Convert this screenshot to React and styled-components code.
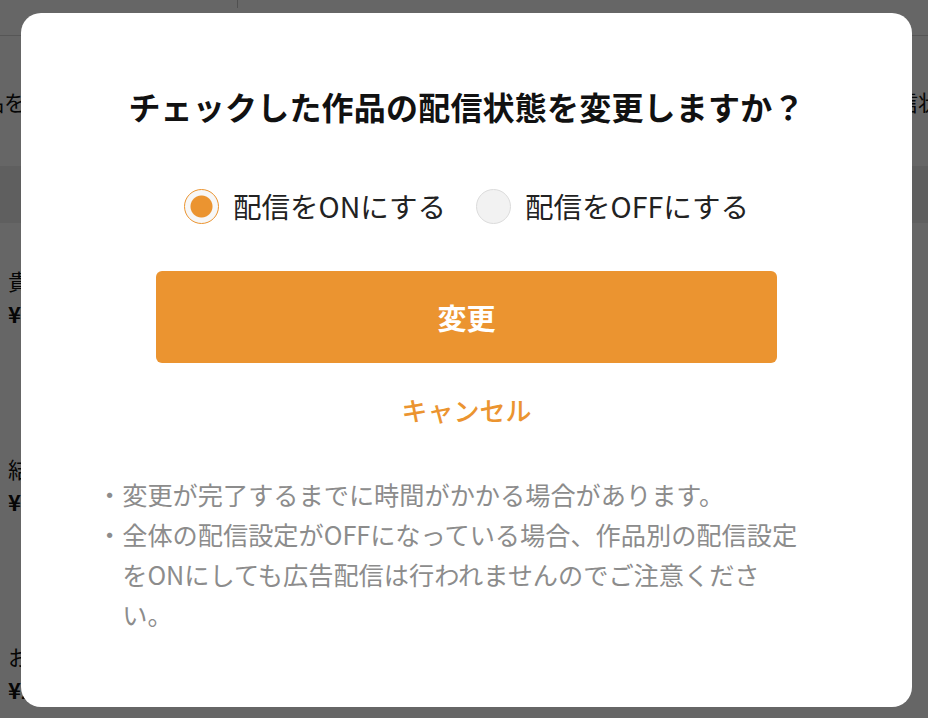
import React, { useState } from "react";
import styled, { createGlobalStyle } from "styled-components";

const ORANGE = "#eb9430";

const works = [
  { id: 1, title: "貴族令嬢の秘密の恋", price: "¥220" },
  { id: 2, title: "結婚から始まる物語", price: "¥330" },
  { id: 3, title: "お隣さんは王子様", price: "¥220" },
];

const notes = [
  "変更が完了するまでに時間がかかる場合があります。",
  "全体の配信設定がOFFになっている場合、作品別の配信設定をONにしても広告配信は行われませんのでご注意ください。",
];

export default function App() {
  const [status, setStatus] = useState("on");

  return (
    <>
      <GlobalStyle />
      <Page>
        <Header>
          <HeaderTab />
        </Header>
        <Toolbar>
          <ToolbarText $offset={-172}>チェックした作品を</ToolbarText>
          <ToolbarText $offset={848}>配信状態を一括変更</ToolbarText>
        </Toolbar>
        <TableHead />
        <WorkList>
          {works.map((work) => (
            <WorkItem key={work.id}>
              <WorkTitle>{work.title}</WorkTitle>
              <WorkPrice>{work.price}</WorkPrice>
            </WorkItem>
          ))}
        </WorkList>
      </Page>

      <Overlay>
        <Modal role="dialog" aria-modal="true">
          <Title>チェックした作品の配信状態を変更しますか？</Title>

          <RadioGroup>
            <RadioOption>
              <Radio
                type="radio"
                name="status"
                checked={status === "on"}
                onChange={() => setStatus("on")}
              />
              配信をONにする
            </RadioOption>
            <RadioOption>
              <Radio
                type="radio"
                name="status"
                checked={status === "off"}
                onChange={() => setStatus("off")}
              />
              配信をOFFにする
            </RadioOption>
          </RadioGroup>

          <SubmitButton type="button">変更</SubmitButton>
          <CancelButton type="button">キャンセル</CancelButton>

          <NoteList>
            {notes.map((note) => (
              <NoteItem key={note}>
                <Bullet>・</Bullet>
                <NoteText>{note}</NoteText>
              </NoteItem>
            ))}
          </NoteList>
        </Modal>
      </Overlay>
    </>
  );
}

const GlobalStyle = createGlobalStyle`
  * {
    box-sizing: border-box;
  }
  html, body {
    margin: 0;
    padding: 0;
  }
  body {
    font-family: "Noto Sans CJK JP", "Noto Sans", sans-serif;
    color: #222;
    background: #fff;
  }
`;

/*------------------------- 背景のページ -------------------------*/
const Page = styled.div`
  width: 100%;
  height: 718px;
  overflow: hidden;
  background: #fff;
`;

const Header = styled.div`
  height: 36px;
  border-bottom: 1px solid #d8d8d8;
`;

const HeaderTab = styled.div`
  width: 238px;
  height: 8px;
  border-right: 1px solid #c8c8c8;
`;

const Toolbar = styled.div`
  display: flex;
  align-items: center;
  height: 130px;
  white-space: nowrap;
`;

const ToolbarText = styled.span`
  flex: none;
  margin-left: ${(p) => p.$offset}px;
  font-size: 22px;
  color: #111;
`;

const TableHead = styled.div`
  height: 57px;
  background: #eee;
`;

const WorkList = styled.ul`
  list-style: none;
  margin: 0;
  padding: 0;
`;

const WorkItem = styled.li`
  display: flex;
  flex-direction: column;
  height: 188px;
  padding: 41px 8px;
`;

const WorkTitle = styled.span`
  font-size: 22px;
  line-height: 33px;
  color: #111;
`;

const WorkPrice = styled.span`
  font-size: 22px;
  line-height: 33px;
  font-weight: 700;
  color: #111;
`;

/*------------------------- モーダル -------------------------*/
const Overlay = styled.div`
  position: fixed;
  inset: 0;
  display: flex;
  align-items: flex-start;
  padding: 13px 16px 11px 21px;
  background: rgba(0, 0, 0, 0.6);
`;

const Modal = styled.div`
  display: flex;
  flex-direction: column;
  align-items: center;
  width: 891px;
  height: 694px;
  background: #fff;
  border-radius: 20px;
`;

const Title = styled.h2`
  margin: 69px 0 0;
  font-size: 32px;
  line-height: 48px;
  font-weight: 700;
  letter-spacing: 0.2px;
  color: #111;
`;

const RadioGroup = styled.div`
  display: flex;
  align-items: center;
  gap: 30px;
  margin-top: 55px;
  height: 42px;
`;

const RadioOption = styled.label`
  display: flex;
  align-items: center;
  gap: 14px;
  font-size: 28.5px;
  line-height: 42px;
  color: #222;
  cursor: pointer;
`;

const Radio = styled.input`
  appearance: none;
  flex: none;
  width: 35px;
  height: 35px;
  margin: 0;
  border-radius: 50%;
  border: 1px solid #dcdcdc;
  background: #f2f2f2;
  cursor: pointer;

  &:checked {
    border-color: ${ORANGE};
    background: radial-gradient(
      circle,
      ${ORANGE} 0,
      ${ORANGE} 10.5px,
      #f7f7f7 11.5px
    );
  }
`;

const SubmitButton = styled.button`
  margin-top: 44px;
  width: 621px;
  height: 92px;
  border: none;
  border-radius: 6px;
  background: ${ORANGE};
  color: #fff;
  font-family: inherit;
  font-size: 29px;
  font-weight: 700;
  cursor: pointer;
`;

const CancelButton = styled.button`
  margin-top: 27px;
  padding: 0;
  border: none;
  background: none;
  color: ${ORANGE};
  font-family: inherit;
  font-size: 26px;
  font-weight: 500;
  line-height: 39px;
  cursor: pointer;
`;

const NoteList = styled.ul`
  align-self: flex-start;
  width: 710px;
  margin: 45px 0 0 76px;
  padding: 0;
  list-style: none;
  color: #8c8c8c;
  font-size: 25.2px;
  line-height: 40px;
`;

const NoteItem = styled.li`
  display: flex;
`;

const Bullet = styled.span`
  flex: none;
  width: 1em;
`;

const NoteText = styled.span`
  flex: 1;
`;
